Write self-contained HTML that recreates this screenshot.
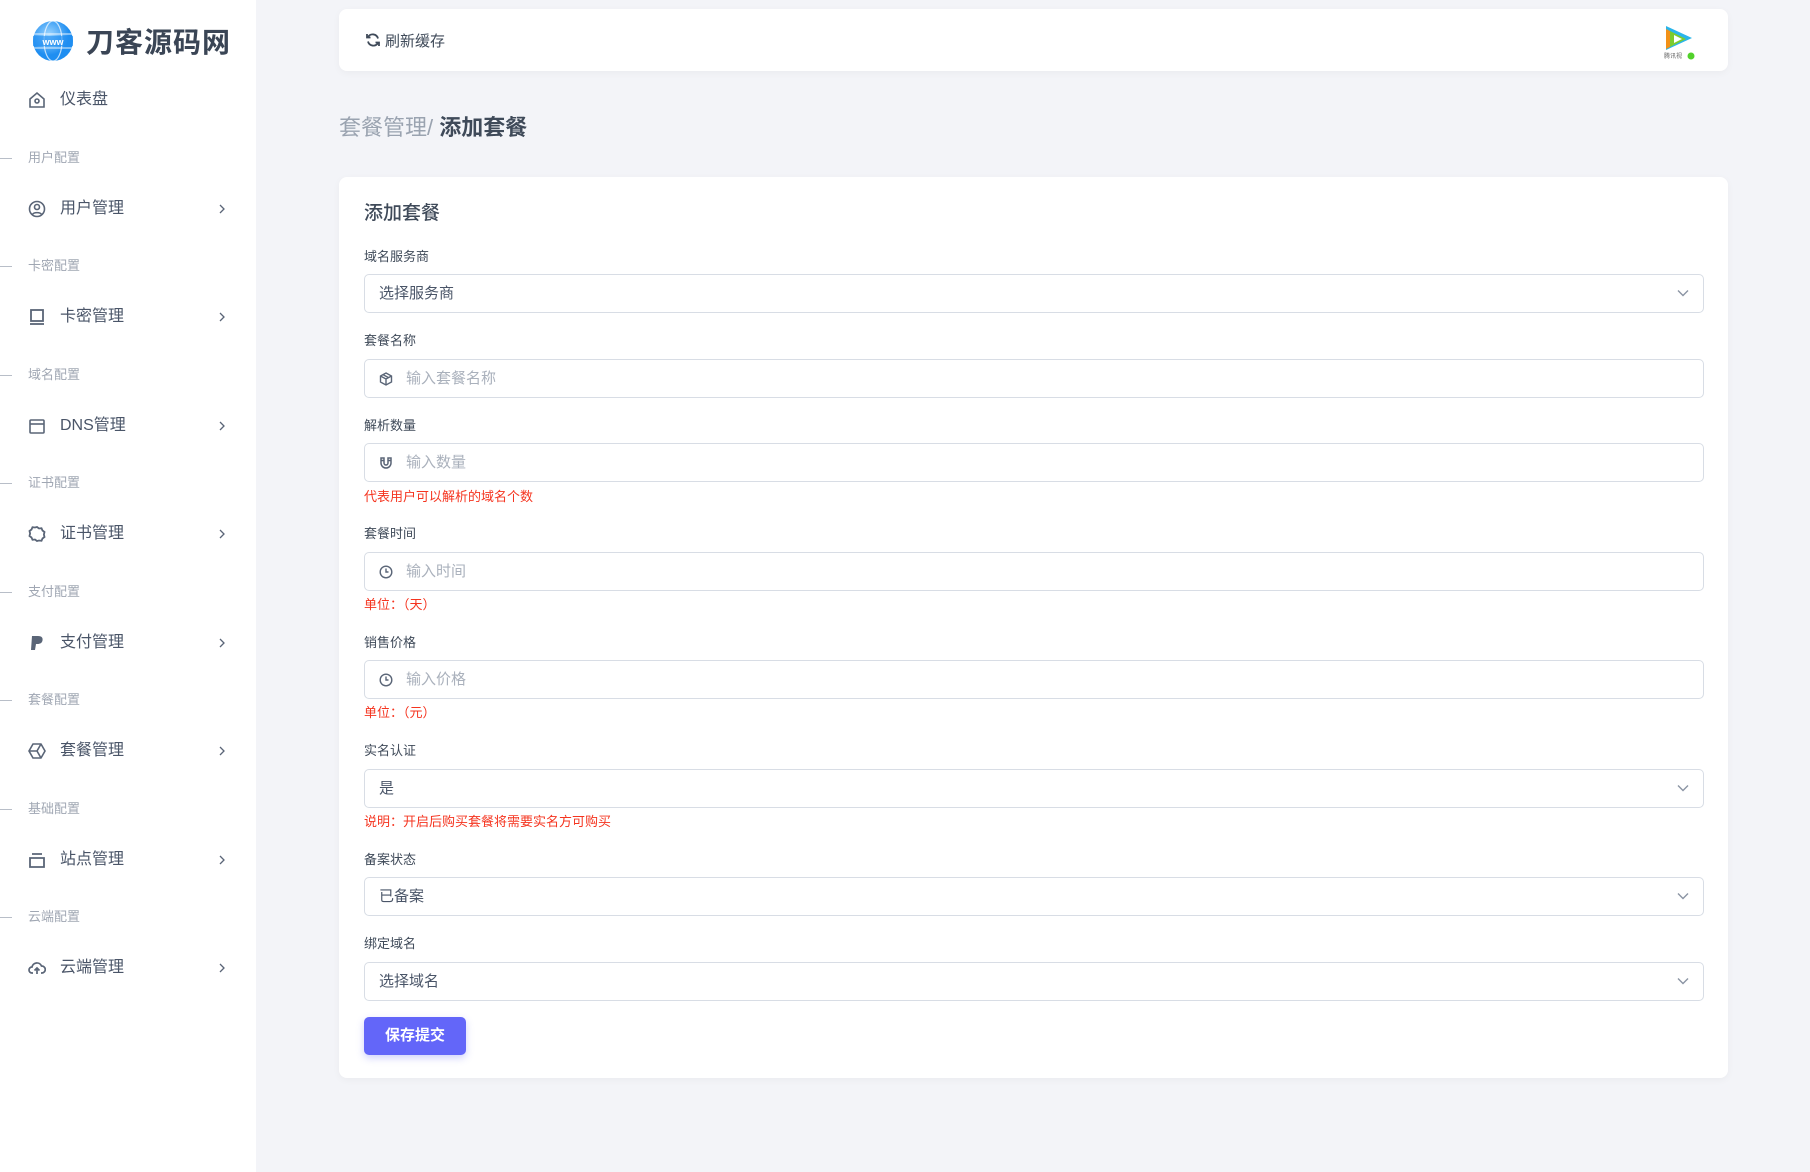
<!DOCTYPE html>
<html><head><meta charset="utf-8"><style>
*{margin:0;padding:0;box-sizing:border-box}
body{width:1810px;height:1172px;background:#f3f4f8;font-family:"Liberation Sans","Noto Sans CJK SC",sans-serif;position:relative;overflow:hidden;color:#4a5568}
.side{position:absolute;left:0;top:0;width:256px;height:1172px;background:#fff}
.a{position:absolute;white-space:nowrap}
.sec{position:absolute;left:28px;font-size:13px;color:#a0a7b3;line-height:16px;margin-top:1px}
.dash{position:absolute;left:0;width:12px;height:1px;background:#b8bec8;margin-top:1px}
.item{position:absolute;left:0;width:256px;height:24px;font-size:16px;color:#4a5568;line-height:24px;margin-top:2px}
.item .t{position:absolute;left:60px;top:0}
.item svg.i{position:absolute;left:28px;top:3px}
.item .ch{position:absolute;left:218px;top:6px}
.card{position:absolute;background:#fff;border-radius:8px;box-shadow:0 2px 8px rgba(0,0,0,0.04)}
.lbl{position:absolute;left:364px;font-size:13px;color:#3f4a59;line-height:16px;margin-top:1px}
.inp{position:absolute;left:364px;width:1340px;height:39px;border:1px solid #d8dde5;border-radius:5px;background:#fff;font-size:15px;line-height:37px;color:#4a5568}
.inp .v{position:absolute;left:14px}
.inp .p{position:absolute;left:41px;color:#aab1bc}
.inp svg.ic{position:absolute;left:14px;top:12px}
.inp svg.dd{position:absolute;right:14px;top:14px}
.help{position:absolute;left:364px;font-size:13px;color:#f5341f;line-height:16px;margin-top:1px}
</style></head><body>
<div class="side">
  <svg class="a" style="left:31px;top:19px" width="44" height="44" viewBox="0 0 44 44">
    <defs><radialGradient id="g" cx="40%" cy="35%"><stop offset="0" stop-color="#9fd6ff"/><stop offset="1" stop-color="#1f8ef1"/></radialGradient></defs>
    <circle cx="22" cy="22" r="20" fill="url(#g)"/>
    <ellipse cx="22" cy="22" rx="9" ry="20" fill="none" stroke="#fff" stroke-width="1.2" opacity=".7"/>
    <path d="M3 15h38M3 29h38" stroke="#fff" stroke-width="1.2" opacity=".7"/>
    <rect x="2" y="17" width="40" height="10" fill="#1f8ef1" opacity=".6"/>
    <text x="22" y="26" font-size="9" font-weight="bold" fill="#fff" text-anchor="middle" font-family="Liberation Sans">www</text>
  </svg>
  <div class="a" style="left:86px;top:21px;font-size:28px;font-weight:bold;color:#3a4555;letter-spacing:1px">刀客源码网</div>

  <div class="item" style="top:86px"><svg class="i" width="18" height="18" viewBox="0 0 18 18" fill="none" stroke="#5a6577" stroke-width="1.6"><path d="M2 8l7-6 7 6v8H2z"/><circle cx="9" cy="10" r="2"/></svg><span class="t">仪表盘</span></div>

  <div class="dash" style="top:157px"></div><div class="sec" style="top:149px">用户配置</div>
  <div class="item" style="top:195px"><svg class="i" width="18" height="18" viewBox="0 0 18 18" fill="none" stroke="#5a6577" stroke-width="1.6"><circle cx="9" cy="9" r="7.5"/><circle cx="9" cy="7" r="2.5"/><path d="M4.5 14.5c1-2.5 8-2.5 9 0"/></svg><span class="t">用户管理</span><svg class="ch" width="8" height="12" viewBox="0 0 8 12"><path d="M2 2l4 4-4 4" fill="none" stroke="#5a6577" stroke-width="1.3"/></svg></div>

  <div class="dash" style="top:265px"></div><div class="sec" style="top:257px">卡密配置</div>
  <div class="item" style="top:303px"><svg class="i" width="18" height="18" viewBox="0 0 18 18" fill="none" stroke="#5a6577" stroke-width="1.8"><rect x="3" y="2" width="12" height="11"/><path d="M2 16h14"/></svg><span class="t">卡密管理</span><svg class="ch" width="8" height="12" viewBox="0 0 8 12"><path d="M2 2l4 4-4 4" fill="none" stroke="#5a6577" stroke-width="1.3"/></svg></div>

  <div class="dash" style="top:374px"></div><div class="sec" style="top:366px">域名配置</div>
  <div class="item" style="top:412px"><svg class="i" width="18" height="18" viewBox="0 0 18 18" fill="none" stroke="#5a6577" stroke-width="1.6"><rect x="2" y="3" width="14" height="13" rx="1"/><path d="M2 7h14"/></svg><span class="t">DNS管理</span><svg class="ch" width="8" height="12" viewBox="0 0 8 12"><path d="M2 2l4 4-4 4" fill="none" stroke="#5a6577" stroke-width="1.3"/></svg></div>

  <div class="dash" style="top:482px"></div><div class="sec" style="top:474px">证书配置</div>
  <div class="item" style="top:520px"><svg class="i" width="18" height="18" viewBox="0 0 18 18" fill="none" stroke="#5a6577" stroke-width="1.8"><path d="M9 2l2 1.5 2.5-.3 1 2.3 2 1.5-.6 2.5.6 2.5-2 1.5-1 2.3-2.5-.3L9 16l-2-1.5-2.5.3-1-2.3-2-1.5.6-2.5-.6-2.5 2-1.5 1-2.3 2.5.3z"/></svg><span class="t">证书管理</span><svg class="ch" width="8" height="12" viewBox="0 0 8 12"><path d="M2 2l4 4-4 4" fill="none" stroke="#5a6577" stroke-width="1.3"/></svg></div>

  <div class="dash" style="top:591px"></div><div class="sec" style="top:583px">支付配置</div>
  <div class="item" style="top:629px"><svg class="i" width="18" height="18" viewBox="0 0 18 18"><path d="M4 2h6c4 0 5 2 4.5 4.5C14 9 12 10 9.5 10H8l-1 6H3z" fill="#5a6577"/></svg><span class="t">支付管理</span><svg class="ch" width="8" height="12" viewBox="0 0 8 12"><path d="M2 2l4 4-4 4" fill="none" stroke="#5a6577" stroke-width="1.3"/></svg></div>

  <div class="dash" style="top:699px"></div><div class="sec" style="top:691px">套餐配置</div>
  <div class="item" style="top:737px"><svg class="i" width="18" height="18" viewBox="0 0 18 18" fill="none" stroke="#5a6577" stroke-width="1.6"><path d="M5 2h8l4 7-4 7H5L1 9z"/><path d="M1 9h8l4-7M9 9l4 7"/></svg><span class="t">套餐管理</span><svg class="ch" width="8" height="12" viewBox="0 0 8 12"><path d="M2 2l4 4-4 4" fill="none" stroke="#5a6577" stroke-width="1.3"/></svg></div>

  <div class="dash" style="top:808px"></div><div class="sec" style="top:800px">基础配置</div>
  <div class="item" style="top:846px"><svg class="i" width="18" height="18" viewBox="0 0 18 18" fill="none" stroke="#5a6577" stroke-width="1.8"><path d="M4 3h10M2 7h14v9H2z"/></svg><span class="t">站点管理</span><svg class="ch" width="8" height="12" viewBox="0 0 8 12"><path d="M2 2l4 4-4 4" fill="none" stroke="#5a6577" stroke-width="1.3"/></svg></div>

  <div class="dash" style="top:916px"></div><div class="sec" style="top:908px">云端配置</div>
  <div class="item" style="top:954px"><svg class="i" width="18" height="18" viewBox="0 0 18 18" fill="none" stroke="#5a6577" stroke-width="1.7"><path d="M5 14H4a3 3 0 010-6 5 5 0 019.5-1A3.5 3.5 0 0114 14h-1"/><path d="M9 15V9M6.5 11.5L9 9l2.5 2.5"/></svg><span class="t">云端管理</span><svg class="ch" width="8" height="12" viewBox="0 0 8 12"><path d="M2 2l4 4-4 4" fill="none" stroke="#5a6577" stroke-width="1.3"/></svg></div>
</div>

<div class="card" style="left:339px;top:9px;width:1389px;height:62px">
  <svg class="a" style="left:26px;top:23px" width="16" height="16" viewBox="0 0 16 16" fill="none" stroke="#3f4a59" stroke-width="1.8"><path d="M13 6.5A5.5 5.5 0 003 5M3 9.5A5.5 5.5 0 0013 11"/><path d="M2 2v3.5h3.5M14 14v-3.5h-3.5"/></svg>
  <div class="a" style="left:46px;top:21px;font-size:15px;color:#3f4a59">刷新缓存</div>
  <svg class="a" style="left:1323px;top:12px" width="34" height="40" viewBox="0 0 34 40">
    <path d="M4 5l26 12-26 12z" fill="#29b5ea"/>
    <path d="M4 8v20l4-2V10z" fill="#f29117"/>
    <path d="M8 10l16 8-16 8z" fill="#7dcb2d"/>
    <path d="M12 14l8 4-8 4z" fill="#fff"/>
    <text x="2" y="37" font-size="6" fill="#666" font-family="Noto Sans CJK SC">腾讯视</text>
    <circle cx="29" cy="35" r="3.5" fill="#52d12b"/>
  </svg>
</div>

<div class="a" style="left:339px;top:110px;font-size:22px;color:#9aa3b0">套餐管理/ <b style="color:#3f4a59">添加套餐</b></div>

<div class="card" style="left:339px;top:177px;width:1389px;height:901px"></div>
<div class="a" style="left:364px;top:198px;font-size:19px;color:#3f4a59;font-weight:500">添加套餐</div>

<div class="lbl" style="top:248px">域名服务商</div>
<div class="inp" style="top:274px"><span class="v">选择服务商</span><svg class="dd" width="12" height="8" viewBox="0 0 12 8"><path d="M1 1.5l5 5 5-5" fill="none" stroke="#8a94a3" stroke-width="1.4"/></svg></div>

<div class="lbl" style="top:332px">套餐名称</div>
<div class="inp" style="top:359px"><svg class="ic" width="14" height="14" viewBox="0 0 14 14" fill="none" stroke="#5a6577" stroke-width="1.4"><path d="M7 1l5.5 3v6L7 13 1.5 10V4z"/><path d="M1.5 4L7 7l5.5-3M7 7v6M4 2.6l5.5 3"/></svg><span class="p">输入套餐名称</span></div>

<div class="lbl" style="top:417px">解析数量</div>
<div class="inp" style="top:443px"><svg class="ic" width="14" height="14" viewBox="0 0 14 14" fill="none" stroke="#5a6577" stroke-width="1.5"><path d="M2 2v5a5 5 0 0010 0V2H9v5a2 2 0 01-4 0V2z"/><path d="M2 4.5h3M9 4.5h3"/></svg><span class="p">输入数量</span></div>
<div class="help" style="top:488px">代表用户可以解析的域名个数</div>

<div class="lbl" style="top:525px">套餐时间</div>
<div class="inp" style="top:552px"><svg class="ic" width="14" height="14" viewBox="0 0 14 14" fill="none" stroke="#5a6577" stroke-width="1.4"><circle cx="7" cy="7" r="5.8"/><path d="M7 3.5V7h2.5"/></svg><span class="p">输入时间</span></div>
<div class="help" style="top:596px">单位：（天）</div>

<div class="lbl" style="top:634px">销售价格</div>
<div class="inp" style="top:660px"><svg class="ic" width="14" height="14" viewBox="0 0 14 14" fill="none" stroke="#5a6577" stroke-width="1.4"><circle cx="7" cy="7" r="5.8"/><path d="M7 3.5V7h2.5"/></svg><span class="p">输入价格</span></div>
<div class="help" style="top:704px">单位：（元）</div>

<div class="lbl" style="top:742px">实名认证</div>
<div class="inp" style="top:769px"><span class="v">是</span><svg class="dd" width="12" height="8" viewBox="0 0 12 8"><path d="M1 1.5l5 5 5-5" fill="none" stroke="#8a94a3" stroke-width="1.4"/></svg></div>
<div class="help" style="top:813px">说明：开启后购买套餐将需要实名方可购买</div>

<div class="lbl" style="top:851px">备案状态</div>
<div class="inp" style="top:877px"><span class="v">已备案</span><svg class="dd" width="12" height="8" viewBox="0 0 12 8"><path d="M1 1.5l5 5 5-5" fill="none" stroke="#8a94a3" stroke-width="1.4"/></svg></div>

<div class="lbl" style="top:935px">绑定域名</div>
<div class="inp" style="top:962px"><span class="v">选择域名</span><svg class="dd" width="12" height="8" viewBox="0 0 12 8"><path d="M1 1.5l5 5 5-5" fill="none" stroke="#8a94a3" stroke-width="1.4"/></svg></div>

<div class="a" style="left:364px;top:1017px;width:102px;height:38px;background:#6366f9;border-radius:5px;color:#fff;font-size:15px;font-weight:bold;text-align:center;line-height:38px;box-shadow:0 3px 8px rgba(99,102,241,0.3)">保存提交</div>
</body></html>
